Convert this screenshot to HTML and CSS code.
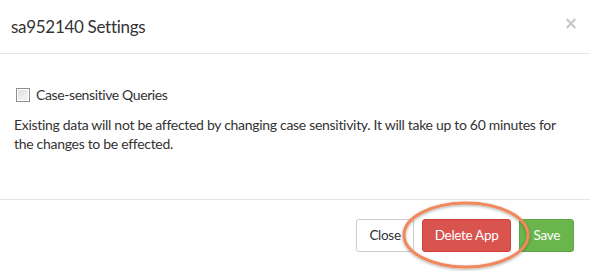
FILE: index.html
```html
<!DOCTYPE html>
<html>
<head>
<meta charset="utf-8">
<link rel="stylesheet" href="styles.css">
</head>
<body>
<div class="modal">
  <div class="modal-header">
    <h4 class="modal-title">sa952140 Settings</h4>
    <span class="close">&times;</span>
  </div>
  <div class="modal-body">
    <label class="check">
      <span class="box"></span>
      <span>Case-sensitive Queries</span>
    </label>
    <p class="note">Existing data will not be affected by changing case sensitivity. It will take up to 60 minutes for<br>the changes to be effected.</p>
  </div>
  <div class="modal-footer">
    <button class="btn btn-default">Close</button>
    <button class="btn btn-danger">Delete App</button>
    <button class="btn btn-success">Save</button>
  </div>
  <svg class="highlight" width="140" height="76" viewBox="0 0 140 76">
    <defs>
      <filter id="sh" x="-20%" y="-20%" width="140%" height="140%">
        <feDropShadow dx="0" dy="1" stdDeviation="1.5" flood-color="#000" flood-opacity="0.35"/>
      </filter>
    </defs>
    <ellipse cx="70" cy="38" rx="62" ry="32" fill="none" stroke="#f0885c" stroke-width="3" filter="url(#sh)"/>
  </svg>
</div>
</body>
</html>
```
FILE: styles.css
```css
html, body {
  margin: 0;
  padding: 0;
  background: #fff;
}
body {
  font-family: Lato, "Open Sans", sans-serif;
  font-size: 14px;
  color: #333;
}
.modal {
  position: relative;
  width: 590px;
  height: 271px;
  overflow: hidden;
}
.modal-header {
  display: flex;
  align-items: center;
  justify-content: space-between;
  padding: 14px 12px 13px 11px;
  height: 26px;
  border-bottom: 1px solid #e5e5e5;
}
.modal-title {
  margin: 0;
  font-size: 17px;
  font-weight: 400;
  letter-spacing: -0.3px;
  line-height: 26px;
  color: #333;
}
.close {
  font-family: "DejaVu Sans", sans-serif;
  font-size: 17px;
  font-weight: bold;
  color: #c8c8c8;
  line-height: 1;
  margin-top: -8px;
}
.modal-body {
  height: 114px;
  padding: 31px 4px 0 14px;
}
.check {
  display: flex;
  align-items: center;
  gap: 6px;
  line-height: 20px;
  margin-left: 2px;
  letter-spacing: -0.4px;
}
.box {
  width: 12px;
  height: 12px;
  border: 1px solid #8f8f8f;
  background: linear-gradient(135deg, #dcdcdc, #f8f8f8);
  box-shadow: inset 0 0 0 1px #fff;
}
.note {
  margin: 11px 0 0;
  letter-spacing: -0.3px;
  line-height: 18.5px;
}
.modal-footer {
  display: flex;
  justify-content: flex-end;
  gap: 8px;
  padding: 19px 16px 0 0;
  border-top: 1px solid #e5e5e5;
}
.btn {
  font-family: inherit;
  font-size: 13.5px;
  letter-spacing: -0.3px;
  height: 33px;
  padding: 0 12px;
  border-radius: 3px;
  border: 1px solid transparent;
  line-height: 31px;
}
.btn-default {
  background: #fff;
  border-color: #ccc;
  color: #333;
}
.btn-danger {
  background: #d9534f;
  border-color: #d43f3a;
  color: #fff;
}
.btn-success {
  background: #6ab54c;
  border-color: #5ea843;
  color: #fff;
  padding: 0 13px;
}
.highlight {
  position: absolute;
  left: 396px;
  top: 197px;
}
```
